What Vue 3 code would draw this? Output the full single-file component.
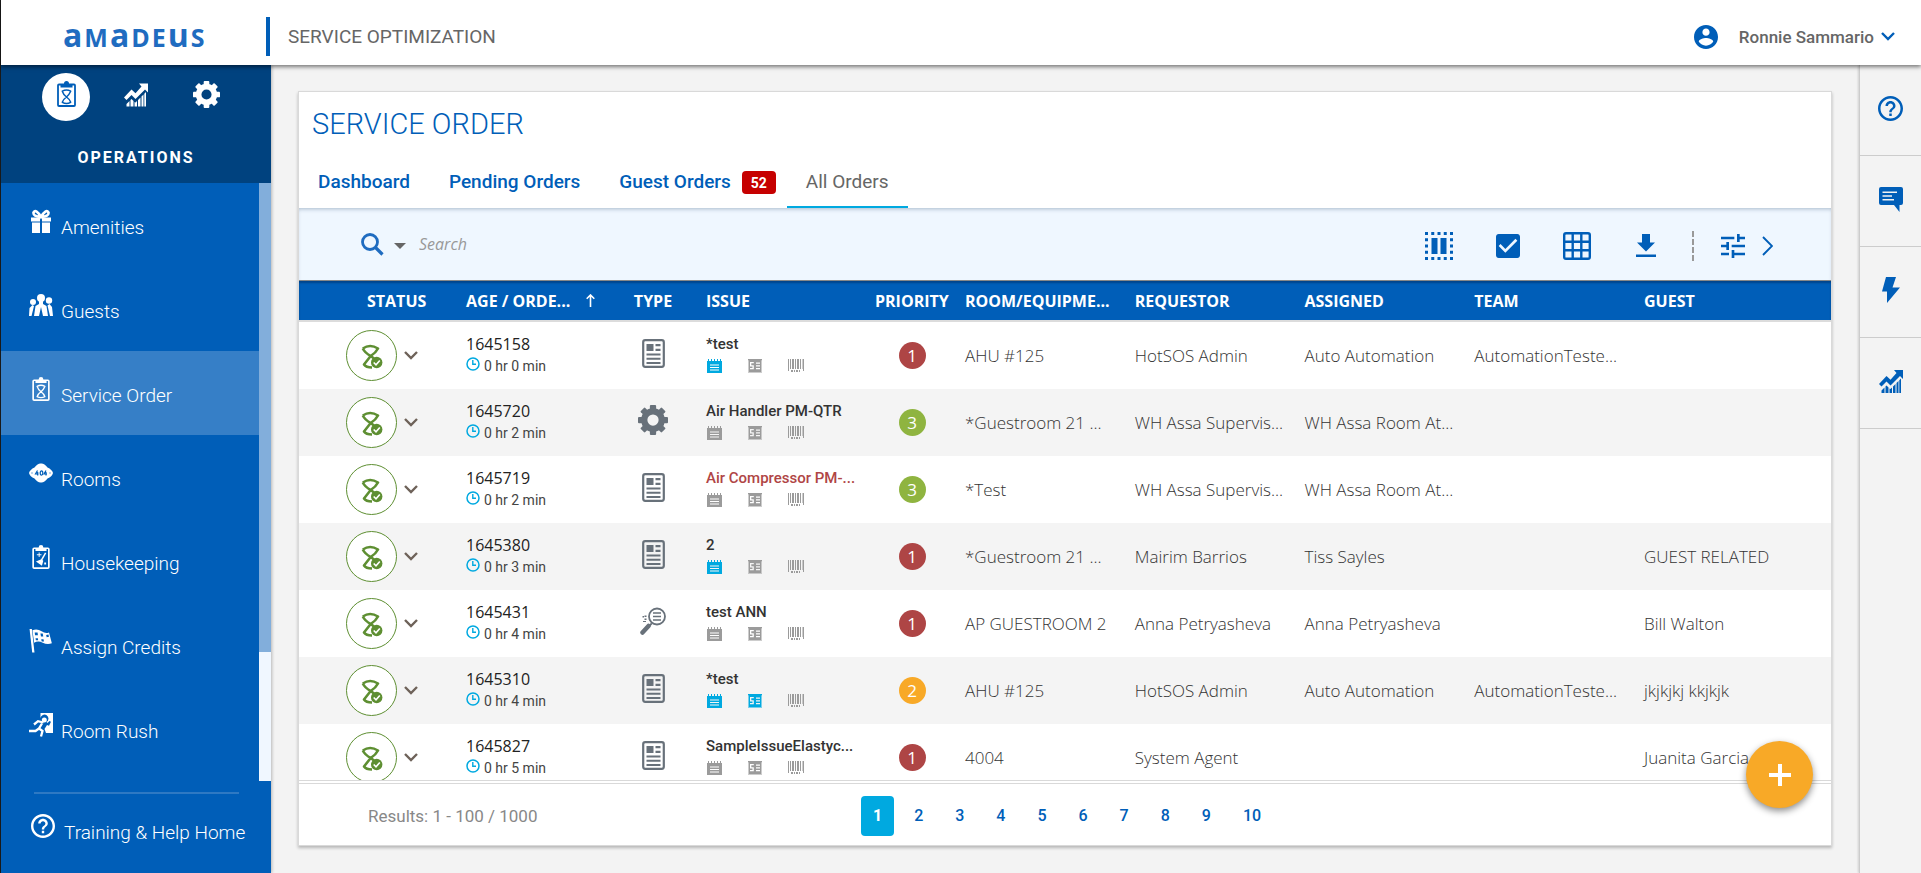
<script setup>
import { ref } from 'vue'

const modules = [
  { id: 'clipboard', label: 'Operations' },
  { id: 'chart', label: 'Reports' },
  { id: 'gear', label: 'Settings' }
]

const navItems = [
  { icon: 'gift', label: 'Amenities' },
  { icon: 'people', label: 'Guests' },
  { icon: 'clipboard', label: 'Service Order' },
  { icon: 'rooms', label: 'Rooms' },
  { icon: 'housekeeping', label: 'Housekeeping' },
  { icon: 'flag', label: 'Assign Credits' },
  { icon: 'rush', label: 'Room Rush' }
]

const tabs = [
  { label: 'Dashboard' },
  { label: 'Pending Orders' },
  { label: 'Guest Orders', count: 52 },
  { label: 'All Orders' }
]

const tools = [
  { id: 'columns', label: 'Columns' },
  { id: 'check', label: 'Select' },
  { id: 'grid', label: 'Grid view' },
  { id: 'download', label: 'Download' }
]

const railItems = [
  { id: 'help', label: 'Help' },
  { id: 'chat', label: 'Messages' },
  { id: 'bolt', label: 'Quick actions' },
  { id: 'chart', label: 'Reports' }
]

const orders = [
  { id: '1645158', age: '0 hr 0 min', type: 'doc', issue: '*test', note: true, cost: false, priority: 1, room: 'AHU #125', requestor: 'HotSOS Admin', assigned: 'Auto Automation', team: 'AutomationTeste...', guest: '' },
  { id: '1645720', age: '0 hr 2 min', type: 'gear', issue: 'Air Handler PM-QTR', note: false, cost: false, priority: 3, room: '*Guestroom 21 ...', requestor: 'WH Assa Supervis...', assigned: 'WH Assa Room At...', team: '', guest: '' },
  { id: '1645719', age: '0 hr 2 min', type: 'doc', issue: 'Air Compressor PM-...', late: true, note: false, cost: false, priority: 3, room: '*Test', requestor: 'WH Assa Supervis...', assigned: 'WH Assa Room At...', team: '', guest: '' },
  { id: '1645380', age: '0 hr 3 min', type: 'doc', issue: '2', note: true, cost: false, priority: 1, room: '*Guestroom 21 ...', requestor: 'Mairim Barrios', assigned: 'Tiss Sayles', team: '', guest: 'GUEST RELATED' },
  { id: '1645431', age: '0 hr 4 min', type: 'inspect', issue: 'test ANN', note: false, cost: false, priority: 1, room: 'AP GUESTROOM 2', requestor: 'Anna Petryasheva', assigned: 'Anna Petryasheva', team: '', guest: 'Bill Walton' },
  { id: '1645310', age: '0 hr 4 min', type: 'doc', issue: '*test', note: true, cost: true, priority: 2, room: 'AHU #125', requestor: 'HotSOS Admin', assigned: 'Auto Automation', team: 'AutomationTeste...', guest: 'jkjkjkj kkjkjk' },
  { id: '1645827', age: '0 hr 5 min', type: 'doc', issue: 'SampleIssueElastyc...', note: false, cost: false, priority: 1, room: '4004', requestor: 'System Agent', assigned: '', team: '', guest: 'Juanita Garcia' }
]

const activeModule = ref('clipboard')
const activeNav = ref('Service Order')
const activeTab = ref('All Orders')
const page = ref(1)
const query = ref('')
</script>

<template>
  <svg class="sprite" aria-hidden="true">
    <symbol id="i-help" viewBox="2 2 20 20"><path d="M11 18h2v-2h-2v2zm1-16C6.48 2 2 6.48 2 12s4.48 10 10 10 10-4.48 10-10S17.52 2 12 2zm0 18c-4.41 0-8-3.59-8-8s3.59-8 8-8 8 3.59 8 8-3.59 8-8 8zm0-14c-2.21 0-4 1.79-4 4h2c0-1.1.9-2 2-2s2 .9 2 2c0 2-3 1.75-3 5h2c0-2.25 3-2.5 3-5 0-2.21-1.79-4-4-4z" /></symbol>
    <symbol id="i-user" viewBox="2 2 20 20"><path d="M12 2C6.48 2 2 6.48 2 12s4.48 10 10 10 10-4.48 10-10S17.52 2 12 2zm0 3c1.66 0 3 1.34 3 3s-1.34 3-3 3-3-1.34-3-3 1.34-3 3-3zm0 14.2c-2.5 0-4.71-1.28-6-3.22.03-1.99 4-3.08 6-3.08 1.99 0 5.97 1.09 6 3.08-1.29 1.94-3.5 3.22-6 3.22z" /></symbol>
    <symbol id="i-gear" viewBox="0 0 24 24">
      <circle cx="12" cy="12" r="7" fill="none" stroke="currentColor" stroke-width="5" />
      <rect v-for="n in 8" :key="n" x="9.5" y="0" width="5" height="4.5" rx=".8" :transform="`rotate(${n * 45} 12 12)`" />
    </symbol>
    <symbol id="i-clipboard" viewBox="0 0 19 26">
      <rect x="1" y="3.5" width="17" height="21.5" rx="1" fill="none" stroke="currentColor" stroke-width="1.8" />
      <path d="M3.5 6.500v-2.500h3.500V2.500a2.500 2.500 0 0 1 5 0V4h3.500v2.500z" />
      <path d="M5.300 10.200Q9.500 7.800 13.700 10.200Q12 14 9.500 16Q6 18.500 5.300 21.300Q9.500 23.500 13.700 21.300Q13 18.500 9.500 16Q6.500 14 5.300 10.200z" fill="none" stroke="currentColor" stroke-width="1.5" stroke-linejoin="round" />
    </symbol>
    <symbol id="i-housekeeping" viewBox="0 0 19 26">
      <rect x="1" y="3.500" width="17" height="21.500" rx="1" fill="none" stroke="currentColor" stroke-width="1.800" />
      <path d="M3.500 6.500v-2.500h3.500V2.500a2.500 2.500 0 0 1 5 0V4h3.500v2.500z" />
      <path d="M14.500 8.500l-4.500 8" fill="none" stroke="currentColor" stroke-width="1.600" />
      <path d="M4 18l6-2.500 2 1.500-1.500 5.500zM5 10h2v-2h1v2h2v1H8v2H7v-2H5zM13 19h2v2h-2z" />
    </symbol>
    <symbol id="i-chart" viewBox="0 0 24 23">
      <path d="M15 0h9v9l-3-3-9.500 9.500-4-4L2.500 16.500 0 14l7.500-8 4 3.800L17.500 3z" />
      <path d="M2.500 23v-2.500l3-3V23zM6.500 23v-6.500l1-1 2 2V23zM10.500 23v-4.500l1 .5 1.500-1.500V23zM14 23v-6.500l2.500-2.500v9zM17.500 23V13l2-2V23zM20.300 23V10.200l1.700-1.700V23z" />
    </symbol>
    <symbol id="i-gift" viewBox="0 0 20 24">
      <path d="M0 8.500h9v4H0zM11 8.500h9v4h-9zM1 13.500h8V24H1zM11 13.500h8V24h-8z" />
      <path d="M10 8Q2 7.500 2.500 3.500Q5 -.500 10 8Q15 -.500 17.500 3.500Q18 7.500 10 8z" fill="none" stroke="currentColor" stroke-width="2.600" />
    </symbol>
    <symbol id="i-people" viewBox="0 0 24 22">
      <circle cx="12" cy="4" r="4" /><circle cx="4" cy="8" r="3" /><circle cx="20" cy="6.500" r="3.200" />
      <path d="M10 7h4v3l3.500 2L19 22h-5l-2-9-2 9H5l1.500-10L10 10zM0 22l.500-8 3-3 1.500 1-2.500 10zM24 22l-1-9-2.500-3-2 1.500L21 22z" />
    </symbol>
    <symbol id="i-rooms" viewBox="0 0 24 19">
      <path d="M0 9.500Q1 6 5.500 4 9-.500 12 0q3-.500 6.500 4Q23 6 24 9.500 23 13 18.500 15 15 19.500 12 19q-3 .500-6.500-4Q1 13 0 9.500z" />
      <path class="cut" d="M8.500 7L6.500 10.500h3M8.700 8.500v3.500M17 7l-2 3.500h3M17 8.500v3.500" />
      <ellipse class="cut" cx="12.500" cy="9.500" rx="1.300" ry="2.200" /><path class="cut" d="M2.500 9.500h1M20.500 9.500h1" />
    </symbol>
    <symbol id="i-flag" viewBox="0 0 20 21">
      <path d="M0 0h2l2.300 20.500H2.300z" />
      <path fill-rule="evenodd" d="M2.500 1q4.500-1.500 8 1t6.500 1l2.500 9.500q-4 1.500-8-.500t-7.500 0zm2 2l.300 2.500h2.500L7 3zm5 1l.500 2.500h2L11.500 4zm5 1.200l.500 2 2-.400-.500-2zM5.200 8l.300 1.800h2L7.300 8zm5 1l.400 2h2l-.400-2z" />
    </symbol>
    <symbol id="i-rush" viewBox="0 0 24 24">
      <path fill-rule="evenodd" d="M11.500 0H24v20h-7l-1.500-4 2.500-4 2 .800 2-4-1.500-.800-2 2-1-1A4 4 0 1 0 11.500 5z" />
      <circle cx="15.300" cy="7" r="2.500" />
      <path d="M5 11.500l4-3.300 5.500 1.300M13 10.500l-3 5 3.500 2.500-1.500 5.500M10 15.500L6.500 18H0" fill="none" stroke="currentColor" stroke-width="2.300" />
    </symbol>
    <symbol id="i-search" viewBox="0 0 23 23"><circle cx="9" cy="9" r="7.500" fill="none" stroke="currentColor" stroke-width="2.800" /><path d="M14.500 14.500l7 7" stroke="currentColor" stroke-width="3.200" /></symbol>
    <symbol id="i-columns" viewBox="0 0 28 28">
      <path d="M1.500 1.500h25v25h-25z" fill="none" stroke="currentColor" stroke-width="3" stroke-dasharray="3 3.250" stroke-dashoffset="1.500" />
      <path d="M6.500 6h6v16h-6zM15.500 6h6v16h-6z" />
    </symbol>
    <symbol id="i-check" viewBox="3 3 18 18"><path d="M19 3H5c-1.110 0-2 .9-2 2v14c0 1.100.89 2 2 2h14c1.110 0 2-.9 2-2V5c0-1.100-.89-2-2-2zm-9 14l-5-5 1.410-1.410L10 14.170l7.590-7.590L19 8l-9 9z" /></symbol>
    <symbol id="i-grid" viewBox="0 0 28 28"><path d="M3 1.200h22q1.800 0 1.800 1.800v22q0 1.800-1.800 1.800H3q-1.800 0-1.800-1.800V3Q1.200 1.200 3 1.200zM1 9.700h26M1 18.300h26M9.700 1v26M18.300 1v26" fill="none" stroke="currentColor" stroke-width="2.400" /></symbol>
    <symbol id="i-download" viewBox="0 0 20 24"><path d="M6 0h8v8.500h5L10 17.500 1 8.500h5zM0 20.500h20v2.500H0z" /></symbol>
    <symbol id="i-tune" viewBox="3 3 18 18"><path d="M3 17v2h6v-2H3zM3 5v2h10V5H3zm10 16v-2h8v-2h-8v-2h-2v6h2zM7 9v2H3v2h4v2h2V9H7zm14 4v-2H11v2h10zm-6-4h2V7h4V5h-4V3h-2v6z" /></symbol>
    <symbol id="i-chat" viewBox="0 0 24 25"><path fill-rule="evenodd" d="M2 0h20q2 0 2 2v14q0 2-2 2h-1.500v7L15 18H2q-2 0-2-2V2Q0 0 2 0zm1.500 4.500V6H18V4.500zm0 3.700v1.500H13V8.200zm0 3.800v1.500H15V12z" /></symbol>
    <symbol id="i-bolt" viewBox="0 0 18 26"><path d="M4 0h10l-3.500 10.500H18L5 26V14.500H0z" /></symbol>
    <symbol id="i-doc" viewBox="0 0 23 29">
      <rect x="1.200" y="1.200" width="20.600" height="26.600" rx="2" fill="none" stroke="currentColor" stroke-width="2.200" />
      <path d="M4.500 5h7v7h-7zM13.500 5h5v2.200h-5zM13.500 9.800h5V12h-5zM4.500 14.500h14v2h-14zM4.500 18.800h14v2h-14zM4.500 23h14v2h-14z" />
    </symbol>
    <symbol id="i-inspect" viewBox="0 0 26 28">
      <circle cx="17" cy="9.500" r="8" fill="none" stroke="currentColor" stroke-width="1.800" />
      <path d="M13 6h8M13 9.500h8M13 13h8" stroke="currentColor" stroke-width="1.600" />
      <path d="M11 15.500l1.500 1.500-2.500 2.500-1-1z" /><path d="M2.500 25.500l6-6.500" stroke="currentColor" stroke-width="4.500" stroke-linecap="round" />
      <path d="M4.500 8.500h2v1.500h-2zM2.500 9h1.500v1.500H2.500zM4.500 11.500h2V13h-2zM3 14h3v1H3z" />
    </symbol>
    <symbol id="i-status" viewBox="0 0 22 25">
      <path d="M1.800 4.500Q9 -.500 17 4.500Q15 8.500 9.700 12L3 20.500Q5 23.500 11 23.500M1.800 4.500Q4 9 9.700 12L13 14.500" fill="none" stroke="currentColor" stroke-width="2.600" stroke-linejoin="round" />
      <circle cx="15.700" cy="18.500" r="5.700" />
      <path class="tick" d="M12.700 18.500l2.300 2.300 3.800-4.300" />
    </symbol>
    <symbol id="i-clock" viewBox="0 0 14 14"><circle cx="7" cy="7" r="6" fill="none" stroke="currentColor" stroke-width="1.500" /><path d="M6.800 3v4.200H10" fill="none" stroke="currentColor" stroke-width="1.400" /></symbol>
    <symbol id="i-note" viewBox="0 0 15 14"><path fill-rule="evenodd" d="M0 2h1V0h1v2h2V0h1v2h2V0h1v2h2V0h1v2h2V0h1v2h1v12H0zm3 3.500v1h9v-1zm0 2.500v1h9V8zm0 2.500v1h9v-1z" /></symbol>
    <symbol id="i-cost" viewBox="0 0 14 14"><path fill-rule="evenodd" d="M0 0h14v1.200h-.500V14h-1v-1h-1v1h-1v-1h-1v1h-1v-1h-1v1h-1v-1h-1v1h-1v-1h-1v1h-1v-1h-1v1h-1V1.200H0zM8 3.500v1.300h4V3.500zm0 2.800v1.200h4V6.300zM8 9v1.300h4V9zM2 3v4.500h2.500V9H2v1.200h3.800V6.300H3.300V4.200h2.500V3z" /></symbol>
    <symbol id="i-barcode" viewBox="0 0 16 13"><path d="M0 0h1v12H0zM2 0h1v10H2zM4 0h2v10H4zM7 0h1v10H7zM9 0h2v10H9zM12 0h1v10h-1zM14 0h.500v10H14zM15 0h1v12h-1zM3 11h2v2H3zM6 11h1v2H6zM8 11h2v2H8zM11 11h1v2h-1z" /></symbol>
    <symbol id="i-down" viewBox="0 0 14 9"><path d="M1 1l6 6 6-6" fill="none" stroke="currentColor" stroke-width="2.400" /></symbol>
    <symbol id="i-right" viewBox="0 0 11 20"><path d="M1 1l9 9-9 9" fill="none" stroke="currentColor" stroke-width="1.900" /></symbol>
    <symbol id="i-caret" viewBox="0 0 12 6"><path d="M0 0h12L6 6z" /></symbol>
    <symbol id="i-up" viewBox="0 0 9 13"><path d="M4.500 13V1M.700 4.800L4.500 1l3.800 3.800" fill="none" stroke="currentColor" stroke-width="1.600" /></symbol>
    <symbol id="i-plus" viewBox="0 0 22 22"><path d="M11 0v22M0 11h22" stroke="currentColor" stroke-width="4" /></symbol>
  </svg>

  <div class="shell">
    <header class="topbar">
      <a class="logo" href="#" aria-label="Amadeus"><span class="lc">a</span><span>M</span><span class="lc">a</span><span>D</span><span>E</span><span class="lc">u</span><span>S</span></a>
      <span class="product">SERVICE OPTIMIZATION</span>
      <button class="account" type="button">
        <svg class="icon s24 blue"><use href="#i-user" /></svg>
        <span>Ronnie Sammario</span>
        <svg class="icon chevron blue"><use href="#i-down" /></svg>
      </button>
    </header>

    <div class="body">
      <aside class="sidebar">
        <div class="modules">
          <div class="module-row">
            <button v-for="m in modules" :key="m.id" type="button" class="module" :class="{ on: m.id === activeModule }" :aria-label="m.label" @click="activeModule = m.id">
              <svg class="icon" :class="m.id"><use :href="`#i-${m.id}`" /></svg>
            </button>
          </div>
          <div class="module-name">OPERATIONS</div>
        </div>
        <div class="nav-area">
          <nav class="nav">
            <a v-for="n in navItems" :key="n.label" href="#" :class="{ on: n.label === activeNav }" @click.prevent="activeNav = n.label">
              <svg class="icon s24"><use :href="`#i-${n.icon}`" /></svg>
              <span>{{ n.label }}</span>
            </a>
          </nav>
          <div class="track"><div class="thumb"></div></div>
        </div>
        <div class="help">
          <a href="#"><svg class="icon s24"><use href="#i-help" /></svg><span>Training &amp; Help Home</span></a>
        </div>
      </aside>

      <main class="main">
        <section class="card">
          <h1>SERVICE ORDER</h1>
          <div class="tabs">
            <button v-for="t in tabs" :key="t.label" type="button" :class="{ on: t.label === activeTab, counted: t.count }" @click="activeTab = t.label">
              {{ t.label }}<span v-if="t.count" class="badge">{{ t.count }}</span>
            </button>
          </div>
          <div class="toolbar">
            <button class="scope" type="button" aria-label="Search options">
              <svg class="icon search"><use href="#i-search" /></svg>
              <svg class="icon caret"><use href="#i-caret" /></svg>
            </button>
            <input v-model="query" type="text" placeholder="Search" aria-label="Search" />
            <div class="tools">
              <button v-for="t in tools" :key="t.id" type="button" :aria-label="t.label"><svg class="icon" :class="t.id"><use :href="`#i-${t.id}`" /></svg></button>
            </div>
            <div class="filters">
              <button type="button" aria-label="Filters"><svg class="icon s24"><use href="#i-tune" /></svg></button>
              <button type="button" aria-label="Expand"><svg class="icon right"><use href="#i-right" /></svg></button>
            </div>
          </div>

          <div class="table-wrap">
            <table>
              <colgroup>
                <col class="c-status" /><col class="c-age" /><col class="c-type" /><col class="c-issue" /><col class="c-priority" />
                <col /><col /><col /><col /><col class="c-guest" />
              </colgroup>
              <thead>
                <tr>
                  <th class="status">STATUS</th>
                  <th><span class="sort">AGE / ORDE...<svg class="icon up"><use href="#i-up" /></svg></span></th>
                  <th class="mid">TYPE</th><th>ISSUE</th><th>PRIORITY</th><th>ROOM/EQUIPME...</th><th>REQUESTOR</th><th>ASSIGNED</th><th>TEAM</th><th>GUEST</th>
                </tr>
              </thead>
              <tbody>
                <tr v-for="o in orders" :key="o.id">
                  <td class="state">
                    <button type="button" aria-label="Change status">
                      <span class="ring"><svg class="icon status-glyph"><use href="#i-status" /></svg></span>
                      <svg class="icon chevron"><use href="#i-down" /></svg>
                    </button>
                  </td>
                  <td>
                    <div class="order">{{ o.id }}</div>
                    <div class="age"><svg class="icon clock"><use href="#i-clock" /></svg>{{ o.age }}</div>
                  </td>
                  <td class="mid"><svg class="icon type" :class="`t-${o.type}`"><use :href="`#i-${o.type}`" /></svg></td>
                  <td>
                    <div class="issue" :class="{ late: o.late }">{{ o.issue }}</div>
                    <div class="marks">
                      <svg class="icon note" :class="{ lit: o.note }"><use href="#i-note" /></svg>
                      <svg class="icon cost" :class="{ lit: o.cost }"><use href="#i-cost" /></svg>
                      <svg class="icon barcode"><use href="#i-barcode" /></svg>
                    </div>
                  </td>
                  <td class="mid"><span class="priority" :class="`p${o.priority}`">{{ o.priority }}</span></td>
                  <td class="text">{{ o.room }}</td><td class="text">{{ o.requestor }}</td><td class="text">{{ o.assigned }}</td><td class="text">{{ o.team }}</td><td class="text">{{ o.guest }}</td>
                </tr>
              </tbody>
            </table>
          </div>

          <footer class="pager">
            <span class="results">Results: 1 - 100 / 1000</span>
            <div class="pages">
              <button v-for="p in 10" :key="p" type="button" :class="{ on: p === page }" @click="page = p">{{ p }}</button>
            </div>
          </footer>
          <button class="fab" type="button" aria-label="New service order"><svg class="icon plus"><use href="#i-plus" /></svg></button>
        </section>
      </main>

      <aside class="rail">
        <button v-for="r in railItems" :key="r.label" type="button" :aria-label="r.label"><svg class="icon" :class="`r-${r.id}`"><use :href="`#i-${r.id}`" /></svg></button>
      </aside>
    </div>
  </div>
</template>

<style>
body { margin: 0; background: #f3f3f3; }
</style>

<style scoped>
* { box-sizing: border-box; }
button { border: 0; background: none; padding: 0; font: inherit; color: inherit; cursor: pointer; }
a { color: inherit; text-decoration: none; }
.sprite { position: absolute; width: 0; height: 0; }
.icon { display: block; flex: none; fill: currentColor; }
.s24 { width: 24px; height: 24px; }
.blue { color: #005eb8; }
.cut { fill: none; stroke: #005eb8; stroke-width: 1.2; }
.tick { fill: none; stroke: #fff; stroke-width: 1.6; }

.shell { display: flex; flex-direction: column; height: 100vh; border-left: 1px solid #1b1b1b; font-family: Roboto, "Liberation Sans", sans-serif; color: #333; background: #f3f3f3; }
.topbar { display: flex; align-items: center; flex: none; height: 65px; padding: 8px 26px 0 0; background: #fff; box-shadow: 0 2px 4px rgba(0, 0, 0, .5); z-index: 2; }
.logo { display: inline-flex; align-items: baseline; gap: 2px; width: 265px; padding: 0 0 2px 62px; line-height: 40px; font-family: "Open Sans", "Noto Sans", sans-serif; font-weight: 700; font-size: 25px; color: #1f6cc0; }
.logo .lc { font-size: 32px; }
.product { height: 39px; padding-left: 18px; border-left: 4px solid #005eb8; line-height: 40px; font-size: 19px; font-weight: 400; color: #666; }
.account { display: flex; align-items: center; margin-left: auto; font-size: 17px; font-weight: 500; color: #666; }
.account span { margin: 0 7px 0 21px; }
.chevron { width: 14px; height: 9px; }

.body { display: flex; flex: 1; min-height: 0; }
.sidebar { display: flex; flex-direction: column; width: 270px; flex: none; background: #005eb8; color: #fff; box-shadow: 1px 0 3px rgba(0, 0, 0, .25); }
.modules { height: 118px; flex: none; padding-top: 8px; background: #00427f; }
.module-row { display: flex; justify-content: center; gap: 22px; }
.module { display: flex; justify-content: center; width: 48px; height: 48px; padding-top: 8px; border-radius: 50%; }
.module.on { background: #fff; color: #005eb8; }
.module .clipboard { width: 19px; height: 26px; }
.module .chart { width: 24px; height: 24px; margin-top: 2px; }
.module .gear { width: 27px; height: 27px; }
.module-name { margin-top: 27px; text-align: center; font-size: 16px; line-height: 20px; font-weight: 700; letter-spacing: 2px; }
.nav-area { display: flex; flex: 1; min-height: 0; }
.nav { flex: 1; overflow: hidden; }
.nav a { display: flex; gap: 8px; height: 84px; padding: 26px 0 0 28px; font-size: 19px; font-weight: 300; line-height: 38px; }
.nav a.on { background: #367fc7; }
.track { width: 12px; background: #f0f7ff; }
.thumb { height: 78.5%; background: #82aedb; }
.help { flex: none; height: 92px; padding: 11px 32px 0 33px; }
.help a { display: flex; gap: 9px; margin: 0 -10px 0 -3px; padding-top: 20px; font-size: 19px; font-weight: 300; line-height: 38px; white-space: nowrap; }
.help::before { content: ""; display: block; height: 2px; background: #2e79c3; }

.main { flex: 1; min-width: 0; padding: 26px 27px 27px; }
.card { position: relative; display: flex; flex-direction: column; height: 100%; border: 1px solid #d9d9d9; background: #fff; box-shadow: 0 2px 3px rgba(0, 0, 0, .25); }
h1 { margin: 12px 0 0 13px; font-size: 29px; line-height: 41px; font-weight: 300; color: #005eb8; }
.tabs { display: flex; align-items: flex-end; gap: 1px; height: 63px; }
.tabs button { display: flex; align-items: center; height: 58px; padding: 8px 19px 0; border-bottom: 2px solid transparent; font-size: 19px; font-weight: 500; line-height: 24px; color: #005eb8; white-space: nowrap; }
.tabs .counted { padding-right: 10px; }
.tabs button.on { border-color: #00a9e0; color: #666; font-weight: 400; }
.badge { margin-left: 11px; width: 34px; height: 23px; border-radius: 4px; background: #c60000; color: #fff; font-size: 14px; font-weight: 700; line-height: 25px; text-align: center; }

.toolbar { display: flex; align-items: center; flex: none; height: 73px; padding: 0 58px 0 62px; background: #eff7ff; border-bottom: 1px solid #888; box-shadow: inset 0 3px 4px -2px rgba(0, 40, 80, .3); color: #005eb8; }
.scope { display: flex; align-items: center; gap: 10px; }
.search { width: 23px; height: 23px; color: #1f6cc0; }
.caret { width: 12px; height: 6px; margin-top: 4px; color: #666; }
input { flex: 1; min-width: 0; margin-left: 13px; padding: 0; border: 0; outline: 0; background: transparent; font: italic 400 16px "Open Sans", "Noto Sans", sans-serif; color: #333; }
input::placeholder { color: #999; opacity: 1; }
.tools { display: flex; align-items: center; margin-top: 3px; }
.tools button { display: flex; justify-content: center; width: 69px; }
.columns, .grid { width: 28px; height: 28px; }
.check { width: 24px; height: 24px; }
.download { width: 20px; height: 24px; }
.filters { display: flex; align-items: center; gap: 17px; height: 30px; margin: 3px 0 0 12px; padding-left: 27px; border-left: 2px dashed #999; }
.right { width: 11px; height: 20px; }

.table-wrap { flex: 1; min-height: 0; overflow: hidden; border-bottom: 1px solid #d9d9d9; }
table { width: 100%; table-layout: fixed; border-collapse: collapse; font-family: "Open Sans", "Noto Sans", sans-serif; font-size: 16px; }
.c-status { width: 159px; } .c-age { width: 150px; } .c-type { width: 90px; } .c-issue { width: 169px; } .c-priority { width: 90px; } .c-guest { width: 195px; }
thead tr { height: 41px; background: #005eb8; box-shadow: inset 0 -2px #dcdcdc, inset 0 2px 2px rgba(0, 30, 70, .4); }
th { padding: 0 8px 2px; text-align: left; font-weight: 700; color: #fff; white-space: nowrap; }
th.status { padding-left: 68px; }
.sort { display: flex; align-items: center; gap: 16px; }
.up { width: 9px; height: 13px; }
td { height: 67px; padding: 0 8px; color: #333; overflow: hidden; text-overflow: ellipsis; white-space: nowrap; line-height: 24px; }
.text { font-size: 17px; font-weight: 300; }
tbody tr:nth-child(even) { background: #f4f4f4; }
.mid { text-align: center; }
.state { padding-left: 47px; }
.state button { display: flex; align-items: center; gap: 7px; color: #6e6259; }
.ring { display: flex; align-items: center; justify-content: center; width: 51px; height: 51px; border: 1px solid #5e8f32; border-radius: 50%; background: #fff; color: #5e8f32; }
.status-glyph { width: 22px; height: 25px; margin-top: 2px; }
.order { font-weight: 500; line-height: 22px; color: #222; }
.age { display: flex; align-items: center; gap: 4px; padding-bottom: 2px; font-family: Roboto, "Liberation Sans", sans-serif; font-size: 14px; line-height: 22px; color: #444; }
.clock { width: 14px; height: 14px; margin-bottom: 4px; color: #00a9e0; }
.type { display: inline-block; vertical-align: middle; margin-bottom: 5px; color: #68717a; }
.t-doc { width: 23px; height: 29px; }
.t-gear { width: 30px; height: 30px; }
.t-inspect { width: 26px; height: 28px; }
.issue { font-family: Roboto, "Liberation Sans", sans-serif; font-size: 15px; font-weight: 500; line-height: 22px; color: #333; }
.issue.late { color: #b04545; }
.marks { display: flex; align-items: center; gap: 26px; height: 23px; padding: 0 0 2px 1px; color: #9b9b9b; }
.note { width: 15px; height: 14px; } .cost { width: 14px; height: 14px; } .barcode { width: 16px; height: 13px; }
.lit { color: #00a9e0; }
.priority { display: inline-block; width: 27px; height: 27px; border-radius: 50%; color: #fff; font-size: 17px; line-height: 28px; vertical-align: middle; }
.p1 { background: #ae4545; } .p2 { background: #f8a927; } .p3 { background: #8fb440; }

.pager { display: grid; grid-template-columns: 1fr auto 1fr; align-items: center; flex: none; height: 62px; margin-top: 2px; padding-top: 2px; border-top: 1px solid #d9d9d9; }
.results { padding-left: 69px; font-size: 17px; color: #888; }
.pages { display: flex; gap: 8px; margin-left: 4px; }
.pages button { height: 40px; padding: 0 12px; border-radius: 4px; font-size: 16px; font-weight: 500; color: #005eb8; }
.pages .on { background: #00a9e0; color: #fff; font-weight: 700; }
.fab { position: absolute; right: 18px; bottom: 37px; display: flex; align-items: center; justify-content: center; width: 67px; height: 67px; border-radius: 50%; background: #f8a927; color: #fff; box-shadow: 0 3px 7px rgba(0, 0, 0, .45); }
.plus { width: 22px; height: 22px; }

.rail { width: 62px; flex: none; border-left: 1px solid #ccc; background: #f3f3f3; color: #005eb8; box-shadow: -1px 0 2px rgba(0, 0, 0, .15); }
.rail button { display: flex; align-items: center; justify-content: center; width: 100%; height: 91px; border-bottom: 1px solid #ccc; padding-bottom: 4px; }
.r-help { width: 25px; height: 25px; } .r-chat { width: 24px; height: 25px; } .r-bolt { width: 18px; height: 26px; } .r-chart { width: 24px; height: 23px; }
</style>
